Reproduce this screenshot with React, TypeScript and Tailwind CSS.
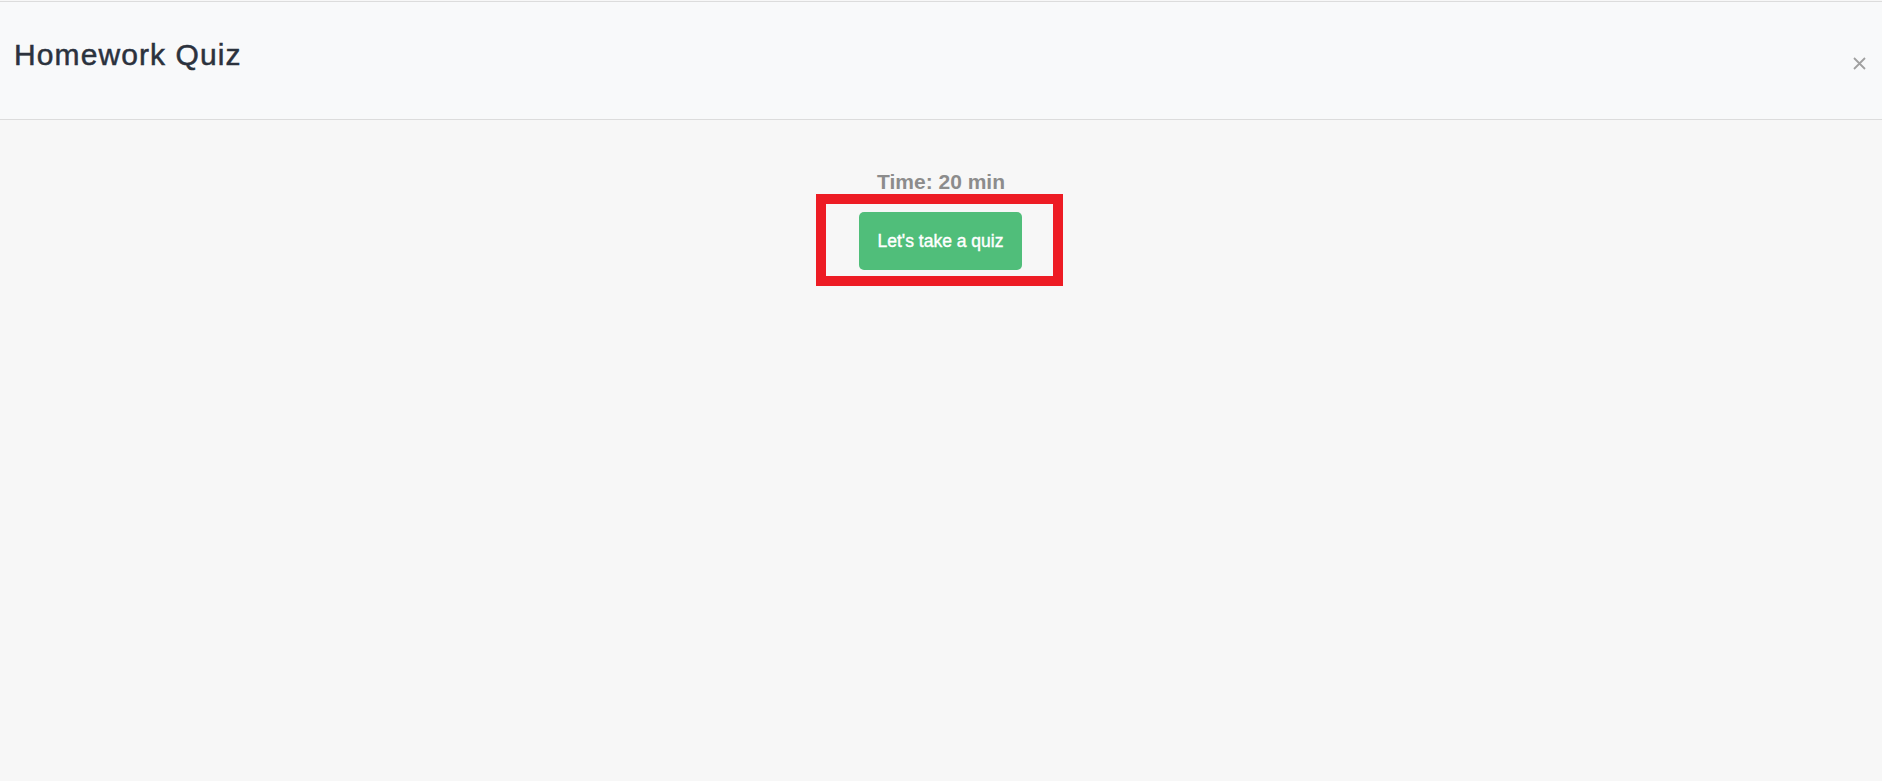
export default function App() {
  return (
    <div className="min-h-[781px] w-full bg-[#f7f7f7] pt-px font-['Liberation_Sans',Arial,sans-serif]">
      <header className="flex h-[119px] items-start justify-between border-y border-[#dcdcdc] bg-[#f8f9fa]">
        <h1 className="pl-[14px] pt-[35px] text-[30px] leading-[36px] tracking-[1.1px] text-[#2b323d] [-webkit-text-stroke:0.5px_#2b323d]">
          Homework Quiz
        </h1>
        <button type="button" aria-label="Close" className="mr-[16px] mt-[55px] h-[13px] w-[13px] text-[#a0a0a0]">
          <svg viewBox="0 0 13 13" className="h-[13px] w-[13px]" fill="none" stroke="currentColor" strokeWidth="1.8">
            <path d="M1 1 L12 12 M12 1 L1 12" />
          </svg>
        </button>
      </header>

      <main className="flex flex-col items-center">
        <p className="mt-[50px] text-[21px] font-bold leading-[24px] text-[#8c8c8c]">Time: 20 min</p>
        <div className="mr-[3px] border-[10px] border-[#ed1c24] pb-[6px] pl-[33px] pr-[31px] pt-[8px]">
          <button
            type="button"
            className="flex h-[58px] w-[163px] items-center justify-center rounded-[5px] bg-[#50be7a] text-[17.5px] text-white [-webkit-text-stroke:0.4px_#ffffff]"
          >
            Let's take a quiz
          </button>
        </div>
      </main>
    </div>
  );
}
